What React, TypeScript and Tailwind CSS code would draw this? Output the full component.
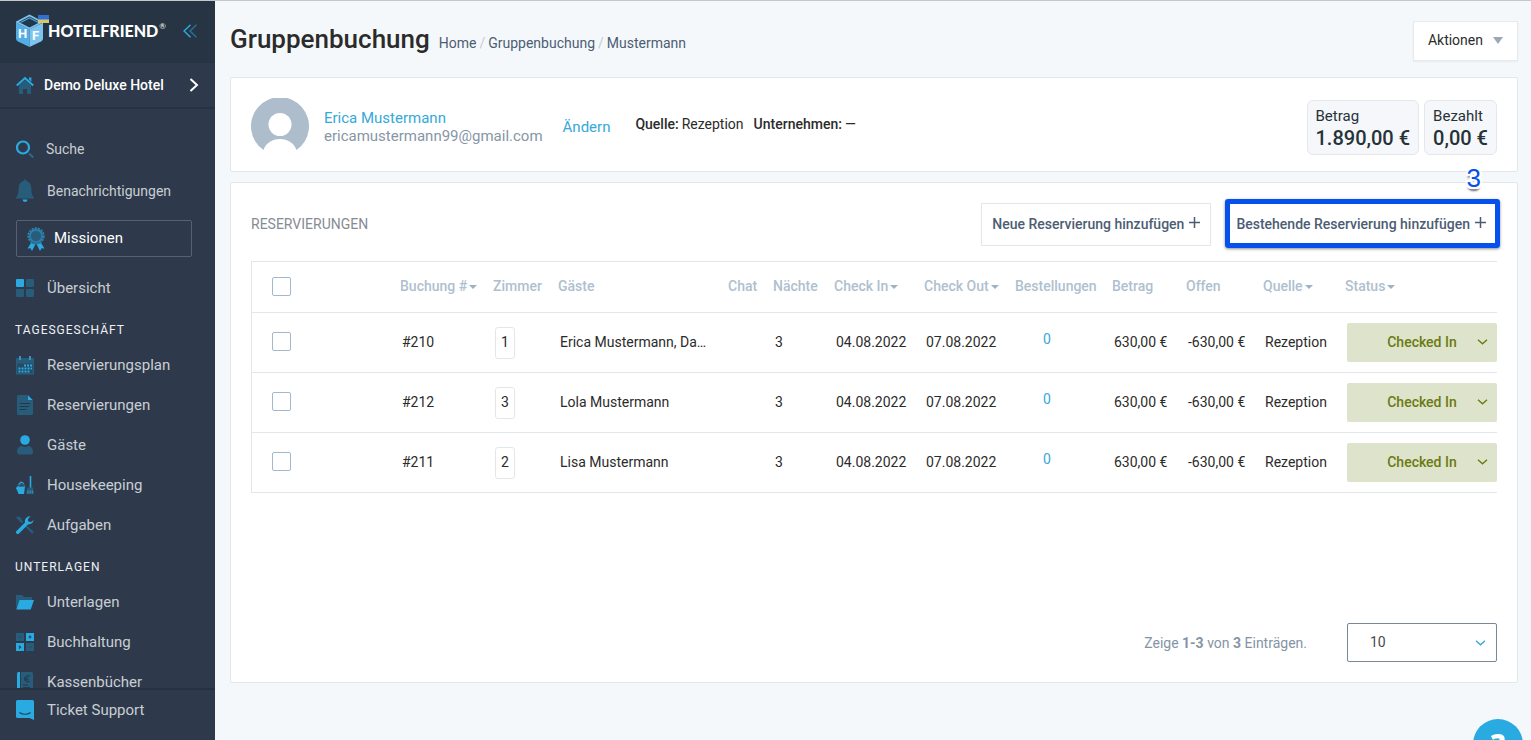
import type { ReactNode } from "react";

const BRIGHT = "#29abe2";
const DIM = "#285c7b";

function Icon({ children, w = 18, h = 18 }: { children: ReactNode; w?: number; h?: number }) {
  return (
    <svg width={w} height={h} viewBox={`0 0 ${w} ${h}`} className="shrink-0" aria-hidden="true">
      {children}
    </svg>
  );
}

const HomeIcon = () => (
  <Icon>
    <path d="M3 9.5 9 4l6 5.500V18h-4v-5H7v5H3Z" fill={DIM} />
    <path d="M.8 9.600 9 2l8.200 7.600" fill="none" stroke={BRIGHT} strokeWidth="2" />
    <path d="M13 1.500h2.400v4.300L13 3.600Z" fill={BRIGHT} />
  </Icon>
);
const SearchIcon = () => (
  <Icon>
    <circle cx="7" cy="7.500" r="6" fill="none" stroke={BRIGHT} strokeWidth="2.200" />
    <path d="m13 13.500 4.300 4" stroke="#2c6a8d" strokeWidth="2" />
  </Icon>
);
const BellIcon = () => (
  <Icon h={24}>
    <path d="M9 .5c.9 0 1.400.7 1.400 1.600C13.800 3 15.300 5.800 15.300 9c0 5 .8 7.500 2.700 9.500v1H0v-1C1.900 16.500 2.700 14 2.700 9c0-3.200 1.500-6 4.900-6.900C7.600 1.200 8.100.5 9 .5Z" fill={DIM} />
    <path d="M6.500 20.500h5a2.500 2.500 0 0 1-5 0Z" fill={BRIGHT} />
  </Icon>
);
const AwardIcon = () => (
  <Icon h={24}>
    <path d="m4 16-3.500 5.500 3-.3L5 24l3.500-7ZM14 16l3.500 5.500-3-.3L13 24l-3.500-7Z" fill={BRIGHT} />
    <circle cx="9" cy="9" r="7.800" fill="none" stroke="#2d83b0" strokeWidth="1.800" strokeDasharray="2.200 1" />
    <circle cx="9" cy="9" r="7" fill="#2d83b0" />
    <circle cx="9" cy="9" r="5.300" fill={DIM} />
  </Icon>
);
const GridIcon = () => (
  <Icon>
    <rect width="8" height="8" rx="1" fill={BRIGHT} />
    <rect x="10" width="8" height="8" rx="1" fill={DIM} />
    <rect y="10" width="8" height="8" rx="1" fill={DIM} />
    <rect x="10" y="10" width="8" height="8" rx="1" fill={DIM} />
  </Icon>
);
const CalendarIcon = () => (
  <Icon h={19}>
    <path d="M0 2h18v16.500H0Z" fill={DIM} />
    <path d="M1.500 7.500h15V17h-15Z" fill="#274860" />
    <path d="M3 0h2v4H3ZM13 0h2v4h-2Z" fill="#3d93bd" />
    <path d="M8 9.500h8M2.500 12.500h13.500M2.500 15.500h11" stroke={BRIGHT} strokeWidth="2" strokeDasharray="2 1" />
  </Icon>
);
const DocumentIcon = () => (
  <Icon h={20}>
    <path d="M2.500 0H11.500L17 5.500V18.500a1.500 1.500 0 0 1-1.500 1.500h-13A1.500 1.500 0 0 1 1 18.500v-17A1.500 1.500 0 0 1 2.500 0Z" fill={DIM} />
    <path d="M12 .3 16.700 5H12Z" fill={BRIGHT} />
    <path d="M3.500 8.500h10.500M3.500 11.500h9.500M3.500 14.500h7" stroke="#24384a" strokeWidth="1" />
  </Icon>
);
const GuestIcon = () => (
  <Icon h={20}>
    <circle cx="9" cy="5" r="4.800" fill={BRIGHT} />
    <path d="M1 17c0-4 2.500-6 5-6 1 .7 2 1 3 1s2-.3 3-1c2.500 0 5 2 5 6 0 1.600-1 2.500-2.500 2.500h-11C2 19.500 1 18.600 1 17Z" fill={DIM} />
  </Icon>
);
const HousekeepingIcon = () => (
  <Icon>
    <path d="M1.500 12a4 4.500 0 0 1 7.500-1.500" fill="none" stroke={DIM} strokeWidth="2" />
    <path d="M2.500 8.500 5 6l3 1.500" fill="none" stroke="#3d93bd" strokeWidth="1.300" />
    <path d="M1 10.500h8L8 18H2.500L1.500 15 0 12.500Z" fill={BRIGHT} />
    <path d="M14.500 0v12" stroke={BRIGHT} strokeWidth="1.600" />
    <path d="M11.500 11.500h5.500l1 6.500h-8Z" fill={DIM} />
    <path d="M12 14.500v3M14.200 14.500v3M16.300 14.500v3" stroke="#3d93bd" strokeWidth="1" />
  </Icon>
);
const ToolsIcon = () => (
  <Icon>
    <path d="m1 1 5.500 5.500M10.500 10.500l6.500 6.500" stroke={DIM} strokeWidth="2.400" />
    <path d="m1 2.500 2-2 3 2.500-1.500 1.500Z" fill={DIM} />
    <path d="M1.800 16.200 11 7" stroke={BRIGHT} strokeWidth="3.600" strokeLinecap="round" />
    <path d="M14.500.3A5 5 0 0 0 9 6.500 5 5 0 0 0 17.700 4L15 6 12.200 5.500 12 3Z" fill={BRIGHT} />
  </Icon>
);
const FolderIcon = () => (
  <Icon h={16}>
    <path d="M0 1h6l2 2h8v4H4L0 14Z" fill={DIM} />
    <path d="M3.500 6H18l-3.300 9.500H.3Z" fill={BRIGHT} />
  </Icon>
);
const AccountingIcon = () => (
  <Icon>
    <rect width="8" height="8" fill={DIM} />
    <rect x="10" width="8" height="8" fill={BRIGHT} />
    <rect y="10" width="8" height="8" fill={BRIGHT} />
    <rect x="10" y="10" width="8" height="8" fill={DIM} />
    <path d="M3 4h2.500M12.500 4h3M14 2.500v3M3 12.800l1.500 1.400L3 15.500M12.500 14h1M14.800 14h1" stroke="#24435a" strokeWidth="1.200" fill="none" />
  </Icon>
);
const CashbookIcon = () => (
  <Icon h={20}>
    <path d="M5 0h10.500A1.500 1.500 0 0 1 17 1.500V20H5Z" fill={DIM} />
    <path d="M1 1.500A1.500 1.500 0 0 1 2.500 0H4v20H1Z" fill={BRIGHT} />
    <path d="M14 4.300a3.200 3.200 0 1 0 0 5M8 6h4.500M8 7.800h4.500M7 13h5M7 15.500h7" stroke="#24384a" strokeWidth="1" fill="none" />
  </Icon>
);
const SupportIcon = () => (
  <Icon h={20}>
    <path d="M1.500 0h15A1.500 1.500 0 0 1 18 1.500V20l-4.500-2h-12A1.500 1.500 0 0 1 0 16.500v-15A1.500 1.500 0 0 1 1.500 0Z" fill={BRIGHT} />
    <path d="M3.500 12.500c3 2.300 8 2.300 11 0" stroke="#24435a" strokeWidth="1.200" fill="none" />
  </Icon>
);

function Logo() {
  return (
    <svg width="34" height="34" viewBox="0 0 34 34" className="shrink-0" aria-hidden="true">
      <path d="M0 8.500 13.500 15.500V33L2 27.500Q0 26.500 0 24.500Z" fill="#54aee6" />
      <path d="M27 8.500 13.500 15.500V33L25 27.500Q27 26.500 27 24.500Z" fill="#7cc4f0" />
      <path d="M1 8 13.500 1.500 26 8 13.500 14.500Z" fill="#22384c" stroke="#7cc4f0" strokeWidth="1.600" />
      <path d="M4.500 8.500 13.500 4l9 4.500" fill="none" stroke="#4f9fd4" strokeWidth="1.200" />
      <path d="M22 1h11v8H22Z" fill="#d9c965" />
      <path d="M22 1h11v4.500H22Z" fill="#2f6fd6" />
      <text x="2" y="24" fontSize="13" fontWeight="700" fill="#fff" fontFamily="Roboto, sans-serif">H</text>
      <text x="16" y="26" fontSize="13" fontWeight="700" fill="#fff" fontFamily="Roboto, sans-serif">F</text>
    </svg>
  );
}

function Chevron({ className }: { className: string }) {
  return (
    <svg width="11" height="6" viewBox="0 0 11 6" className={className} aria-hidden="true">
      <path d="m1 .8 4.500 4 4.500-4" fill="none" stroke="currentColor" strokeWidth="1.400" />
    </svg>
  );
}

function Plus() {
  return (
    <svg width="11" height="11" viewBox="0 0 11 11" className="mb-[2px] shrink-0" aria-hidden="true">
      <path d="M5.500 0v11M0 5.500h11" stroke="currentColor" strokeWidth="1.500" />
    </svg>
  );
}

function NavItem({ icon, label }: { icon: ReactNode; label: string }) {
  return (
    <a href="#" className="flex h-10 items-center gap-[13px] pl-4 text-[15px] text-[#c9ced4]">
      {icon}
      {label}
    </a>
  );
}

function NavHeading({ children }: { children: string }) {
  return (
    <h2 className="flex h-[37px] items-center pt-[7px] pl-[15px] text-xs tracking-[1px] text-[#eef1f4]">{children}</h2>
  );
}

function Sidebar() {
  return (
    <aside className="sticky top-0 flex h-screen w-[215px] shrink-0 flex-col border-t border-[#c4c8cc] bg-[#2e3a4b]">
      <div className="flex h-[62px] shrink-0 items-center bg-[#263443] pb-[2px] pl-4">
        <Logo />
        <a href="#" className="-ml-[2px] flex font-[Lato,sans-serif] text-base font-black text-white">
          HOTELFRIEND<sup className="top-0 ml-px text-[8px] leading-[14px] font-normal">®</sup>
        </a>
        <button type="button" aria-label="Menü einklappen" className="mr-[18px] ml-auto">
          <svg width="14" height="14" viewBox="0 0 14 14" aria-hidden="true">
            <path d="M7.500.7 1 7l6.500 6.300" fill="none" stroke={BRIGHT} strokeWidth="1.500" />
            <path d="M13.500.7 7 7l6.500 6.300" fill="none" stroke="#2c6f95" strokeWidth="1.500" />
          </svg>
        </button>
      </div>
      <a href="#" className="flex h-[46px] shrink-0 items-center gap-[10px] border-b-2 border-[#273241] pr-4 pl-4 text-sm font-medium text-white">
        <HomeIcon />
        <span className="flex-1">Demo Deluxe Hotel</span>
        <svg width="10" height="14" viewBox="0 0 10 14" aria-hidden="true">
          <path d="m1.500 1 6.500 6-6.500 6" fill="none" stroke="#fff" strokeWidth="2" />
        </svg>
      </a>
      <nav className="min-h-0 flex-1 overflow-hidden pt-[19px]">
        <a href="#" className="flex h-[42px] items-center gap-3 pl-4 text-sm text-[#c9ced4]"><SearchIcon />Suche</a>
        <a href="#" className="flex h-[42px] items-center gap-[13px] pl-4 text-sm text-[#c9ced4]"><BellIcon />Benachrichtigungen</a>
        <a href="#" className="mt-2 mr-[23px] mb-[11px] ml-4 flex h-[37px] items-center gap-[9px] rounded-xs border border-[#566274] pl-[10px] text-[15px] text-white"><AwardIcon />Missionen</a>
        <NavItem icon={<GridIcon />} label="Übersicht" />
        <NavHeading>TAGESGESCHÄFT</NavHeading>
        <NavItem icon={<CalendarIcon />} label="Reservierungsplan" />
        <NavItem icon={<DocumentIcon />} label="Reservierungen" />
        <NavItem icon={<GuestIcon />} label="Gäste" />
        <NavItem icon={<HousekeepingIcon />} label="Housekeeping" />
        <NavItem icon={<ToolsIcon />} label="Aufgaben" />
        <NavHeading>UNTERLAGEN</NavHeading>
        <NavItem icon={<FolderIcon />} label="Unterlagen" />
        <NavItem icon={<AccountingIcon />} label="Buchhaltung" />
        <NavItem icon={<CashbookIcon />} label="Kassenbücher" />
      </nav>
      <div className="h-[52px] shrink-0 border-t-2 border-[#273241]">
        <NavItem icon={<SupportIcon />} label="Ticket Support" />
      </div>
    </aside>
  );
}

const columns = [
  { label: "Buchung #", width: "w-[93px]", sort: true },
  { label: "Zimmer", width: "w-[65px]" },
  { label: "Gäste", width: "" },
  { label: "Chat", width: "w-[45px]" },
  { label: "Nächte", width: "w-[61px]" },
  { label: "Check In", width: "w-[90px]", sort: true },
  { label: "Check Out", width: "w-[91px]", sort: true },
  { label: "Bestellungen", width: "w-[97px]" },
  { label: "Betrag", width: "w-[74px]" },
  { label: "Offen", width: "w-[77px]" },
  { label: "Quelle", width: "w-[82px]", sort: true },
  { label: "Status", width: "w-[152px]", sort: true },
];

const bookings = [
  { id: "#210", room: "1", guests: "Erica Mustermann, Da…" },
  { id: "#212", room: "3", guests: "Lola Mustermann" },
  { id: "#211", room: "2", guests: "Lisa Mustermann" },
];

function Checkbox({ label }: { label: string }) {
  return (
    <input
      type="checkbox"
      aria-label={label}
      className="ml-5 block size-[19px] appearance-none rounded-xs border border-[#a3b8cd] bg-white checked:bg-[#29abe2]"
    />
  );
}

function BookingTable() {
  return (
    <table className="mt-[15px] w-full min-w-[1180px] table-fixed border-separate border-spacing-0 border-t border-l border-[#e1e8ec] text-left text-sm text-[#2b2b2b]">
      <thead>
        <tr className="h-[51px] text-[#afbfcf] *:border-b *:border-[#e1e8ec] *:px-0 *:pt-0 *:pb-[2px]">
          <th className="w-[148px]"><Checkbox label="Alle auswählen" /></th>
          {columns.map((c) => (
            <th key={c.label} className={`${c.width} font-medium whitespace-nowrap`}>
              {c.label}
              {c.sort && (
                <svg width="8" height="4" viewBox="0 0 8 4" className="ml-[2px] inline-block" aria-hidden="true">
                  <path d="M0 0h8L4 4Z" fill="#9fb2c5" />
                </svg>
              )}
            </th>
          ))}
        </tr>
      </thead>
      <tbody>
        {bookings.map((b) => (
          <tr key={b.id} className="h-[60px] *:border-b *:border-[#e1e8ec] *:px-0 *:pt-0 *:pb-[2px] *:whitespace-nowrap">
            <td><Checkbox label={`Buchung ${b.id} auswählen`} /></td>
            <td><span className="pl-[2px]">{b.id}</span></td>
            <td>
              <span className="mt-[2px] ml-[2px] flex h-8 w-5 items-center justify-center rounded-[3px] border border-[#e1e8ec] pb-[2px]">{b.room}</span>
            </td>
            <td><div className="truncate pl-[2px]">{b.guests}</div></td>
            <td />
            <td><span className="pl-[2px]">3</span></td>
            <td><span className="pl-[2px]">04.08.2022</span></td>
            <td><span className="pl-[2px]">07.08.2022</span></td>
            <td><a href="#" className="block pr-[33px] pb-[6px] text-center text-[#35a9d9]">0</a></td>
            <td><span className="pl-[2px]">630,00 €</span></td>
            <td><span className="pl-[2px]">-630,00 €</span></td>
            <td><span className="pl-[2px]">Rezeption</span></td>
            <td>
              <div className="relative mt-[2px] ml-[2px] text-[#6b7b12]">
                <select aria-label={`Status ${b.id}`} className="block h-[39px] w-full appearance-none rounded-xs bg-[#dee3cb] pb-[2px] text-center font-medium">
                  <option>Checked In</option>
                  <option>Checked Out</option>
                </select>
                <Chevron className="pointer-events-none absolute top-4 right-[9px]" />
              </div>
            </td>
          </tr>
        ))}
      </tbody>
    </table>
  );
}

function Amount({ label, value }: { label: string; value: string }) {
  return (
    <div className="rounded-md border border-[#e3e8ec] bg-[#f5f7fa] px-2 pt-[5px] pb-1 text-[#263238]">
      <div className="text-[15px] leading-[21px]">{label}</div>
      <div className="text-xl leading-[23px] font-medium">{value}</div>
    </div>
  );
}

export default function App() {
  return (
    <div className="flex min-h-screen bg-[#f5f8fb] font-[Roboto,sans-serif]">
      <Sidebar />
      <main className="min-w-0 flex-1 border-t border-[#c4c8cc] pt-5 pr-[13px] pb-[57px] pl-[15px]">
        <header className="flex items-start justify-between">
          <div className="flex items-baseline gap-[9px]">
            <h1 className="text-[26px] leading-9 font-medium text-[#2b2b2b]">Gruppenbuchung</h1>
            <nav className="flex gap-[3px] text-sm text-[#4c5d73]">
              <a href="#">Home</a>
              <span className="text-[#c5ccd3]">/</span>
              <a href="#">Gruppenbuchung</a>
              <span className="text-[#c5ccd3]">/</span>
              <span>Mustermann</span>
            </nav>
          </div>
          <button type="button" className="flex h-10 items-center gap-[10px] border border-[#e6eaed] bg-white px-[14px] pb-[2px] text-sm text-[#2b2b2b] shadow-xs">
            Aktionen
            <svg width="10" height="7" viewBox="0 0 10 7" aria-hidden="true"><path d="M0 0h10L5 7Z" fill="#9aa8b8" /></svg>
          </button>
        </header>

        <section className="mt-4 flex items-center rounded-xs border border-[#e1e8ec] bg-white px-5 pt-5 pb-[15px]">
          <svg width="58" height="58" viewBox="0 0 58 58" aria-hidden="true" className="shrink-0">
            <path d="M12.500 52A29 29 0 1 1 45.500 52C43 45 37 41 29 41S15 45 12.500 52Z" fill="#aebdcb" />
            <circle cx="29" cy="26.500" r="11.500" fill="#fff" />
          </svg>
          <div className="ml-[15px] text-[15px] leading-[18px]">
            <a href="#" className="block text-[#35a9d9]">Erica Mustermann</a>
            <div className="text-[#8696a6]">ericamustermann99@gmail.com</div>
          </div>
          <a href="#" className="ml-5 text-[15px] text-[#35a9d9]">Ändern</a>
          <dl className="mb-[6px] ml-[25px] flex gap-[10px] text-sm text-[#2b2b2b]">
            <div className="flex gap-[3px]"><dt className="font-medium">Quelle:</dt><dd>Rezeption</dd></div>
            <div className="flex gap-[3px]"><dt className="font-medium">Unternehmen:</dt><dd>—</dd></div>
          </dl>
          <div className="ml-auto flex gap-[5px]">
            <Amount label="Betrag" value="1.890,00 €" />
            <Amount label="Bezahlt" value="0,00 €" />
          </div>
        </section>

        <section className="mt-[10px] rounded-xs border border-[#e1e8ec] bg-white p-5">
          <div className="flex items-center justify-between">
            <h2 className="pb-[2px] text-sm text-[#868c93]">RESERVIERUNGEN</h2>
            <div className="flex gap-[14px] text-sm font-medium text-[#4c5d73]">
              <button type="button" className="flex h-[43px] items-center gap-[5px] border border-[#e1e8ec] bg-white px-[10px] pb-[2px]">
                Neue Reservierung hinzufügen
                <Plus />
              </button>
              <div className="relative">
                <button type="button" className="flex h-[43px] items-center gap-[5px] border border-[#e1e8ec] bg-white px-[10px] pb-[2px]">
                  Bestehende Reservierung hinzufügen
                  <Plus />
                </button>
                <span className="pointer-events-none absolute -top-1 -right-[3px] -bottom-[2px] left-0 rounded-[3px] border-5 border-[#0650ee] shadow-[0_1px_3px_rgba(0,0,0,0.45)]" />
                <span className="absolute right-4 bottom-14 font-['Liberation_Sans',sans-serif] text-[26px] leading-6 font-normal text-[#0650ee] [text-shadow:-2px_0_#fff,2px_0_#fff,0_-2px_#fff,0_2px_#fff,-2px_-2px_#fff,2px_2px_#fff,2px_-2px_#fff,-2px_2px_#fff,0_4px_2px_#666]">3</span>
              </div>
            </div>
          </div>
          <BookingTable />
          <div className="mt-[130px] flex items-center justify-end gap-10 text-sm text-[#8494a5]">
            <p>Zeige <b>1-3</b> von <b>3</b> Einträgen.</p>
            <div className="relative w-[150px]">
              <select aria-label="Einträge pro Seite" className="block h-[39px] w-full appearance-none rounded-xs border border-[#7b8796] bg-white pb-[2px] pl-[22px] text-[#4a4a4a]">
                <option>10</option>
                <option>25</option>
                <option>50</option>
              </select>
              <Chevron className="pointer-events-none absolute top-[17px] right-[11px] text-[#35a9d9]" />
            </div>
          </div>
        </section>
      </main>
      <button type="button" className="fixed right-2 -bottom-[29px] size-[50px] rounded-full bg-[#29abe2] pb-[2px] font-['Open_Sans',sans-serif] text-[28px] font-extrabold text-white">?</button>
    </div>
  );
}
